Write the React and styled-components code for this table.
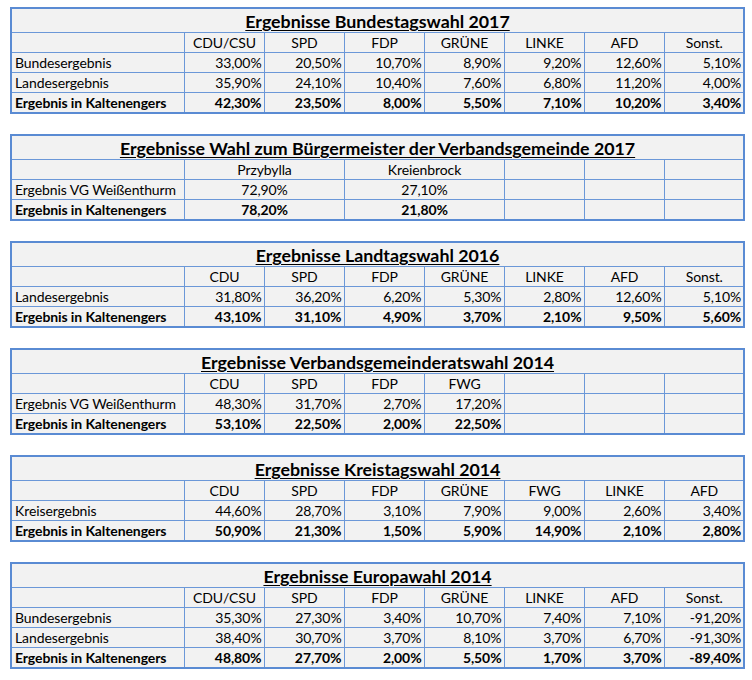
import React from 'react';
import styled, { createGlobalStyle } from 'styled-components';

const GlobalStyle = createGlobalStyle`
  body {
    margin: 0;
    background: #ffffff;
    font-family: Lato, "Liberation Sans", sans-serif;
    color: #000;
  }
`;

const Page = styled.div`
  display: flex;
  flex-direction: column;
  gap: 20px;
  padding: 7px 0 0 10px;
`;

const Table = styled.table`
  width: 733px;
  table-layout: fixed;
  border-collapse: collapse;
  border: 2px solid #5a8bd3;
  background: #f2f2f2;
  font-size: 14px;
  letter-spacing: -0.1px;
`;

const TitleCell = styled.td`
  height: 23px;
  padding: 0;
  text-align: center;
  vertical-align: bottom;
  font-size: 17.8px;
  font-weight: 700;
  line-height: 22px;
  letter-spacing: 0;
  border: 1px solid #6b98d8;

  span {
    text-decoration: underline;
    text-underline-offset: 2px;
  }
`;

const Cell = styled.td`
  height: 19px;
  padding: 0 2px 0 3px;
  line-height: 19px;
  white-space: nowrap;
  overflow: visible;
  vertical-align: bottom;
  border: 1px solid #6b98d8;
  text-align: ${({ $align }) => $align || 'right'};
  font-weight: ${({ $bold }) => ($bold ? 700 : 400)};
`;

const tables = [
  {
    title: 'Ergebnisse Bundestagswahl 2017',
    head: ['CDU/CSU', 'SPD', 'FDP', 'GRÜNE', 'LINKE', 'AFD', 'Sonst.'],
    rows: [
      ['Bundesergebnis', '33,00%', '20,50%', '10,70%', '8,90%', '9,20%', '12,60%', '5,10%'],
      ['Landesergebnis', '35,90%', '24,10%', '10,40%', '7,60%', '6,80%', '11,20%', '4,00%'],
      ['Ergebnis in Kaltenengers', '42,30%', '23,50%', '8,00%', '5,50%', '7,10%', '10,20%', '3,40%'],
    ],
  },
  {
    title: 'Ergebnisse Wahl zum Bürgermeister der Verbandsgemeinde 2017',
    head: ['Przybylla', 'Kreienbrock', '', '', ''],
    span: [2, 2, 1, 1, 1],
    centered: true,
    rows: [
      ['Ergebnis VG Weißenthurm', '72,90%', '27,10%', '', '', ''],
      ['Ergebnis in Kaltenengers', '78,20%', '21,80%', '', '', ''],
    ],
  },
  {
    title: 'Ergebnisse Landtagswahl 2016',
    head: ['CDU', 'SPD', 'FDP', 'GRÜNE', 'LINKE', 'AFD', 'Sonst.'],
    rows: [
      ['Landesergebnis', '31,80%', '36,20%', '6,20%', '5,30%', '2,80%', '12,60%', '5,10%'],
      ['Ergebnis in Kaltenengers', '43,10%', '31,10%', '4,90%', '3,70%', '2,10%', '9,50%', '5,60%'],
    ],
  },
  {
    title: 'Ergebnisse Verbandsgemeinderatswahl 2014',
    head: ['CDU', 'SPD', 'FDP', 'FWG', '', '', ''],
    rows: [
      ['Ergebnis VG Weißenthurm', '48,30%', '31,70%', '2,70%', '17,20%', '', '', ''],
      ['Ergebnis in Kaltenengers', '53,10%', '22,50%', '2,00%', '22,50%', '', '', ''],
    ],
  },
  {
    title: 'Ergebnisse Kreistagswahl 2014',
    head: ['CDU', 'SPD', 'FDP', 'GRÜNE', 'FWG', 'LINKE', 'AFD'],
    rows: [
      ['Kreisergebnis', '44,60%', '28,70%', '3,10%', '7,90%', '9,00%', '2,60%', '3,40%'],
      ['Ergebnis in Kaltenengers', '50,90%', '21,30%', '1,50%', '5,90%', '14,90%', '2,10%', '2,80%'],
    ],
  },
  {
    title: 'Ergebnisse Europawahl 2014',
    head: ['CDU/CSU', 'SPD', 'FDP', 'GRÜNE', 'LINKE', 'AFD', 'Sonst.'],
    rows: [
      ['Bundesergebnis', '35,30%', '27,30%', '3,40%', '10,70%', '7,40%', '7,10%', '-91,20%'],
      ['Landesergebnis', '38,40%', '30,70%', '3,70%', '8,10%', '3,70%', '6,70%', '-91,30%'],
      ['Ergebnis in Kaltenengers', '48,80%', '27,70%', '2,00%', '5,50%', '1,70%', '3,70%', '-89,40%'],
    ],
  },
];

function ResultTable({ data }) {
  const span = data.span || data.head.map(() => 1);
  return (
    <Table>
      <colgroup>
        <col style={{ width: 173 }} />
        {Array.from({ length: 7 }).map((_, i) => (
          <col key={i} style={{ width: 80 }} />
        ))}
      </colgroup>
      <tbody>
        <tr>
          <TitleCell colSpan={8}>
            <span>{data.title}</span>
          </TitleCell>
        </tr>
        <tr>
          <Cell />
          {data.head.map((h, i) => (
            <Cell key={i} colSpan={span[i]} $align="center">
              {h}
            </Cell>
          ))}
        </tr>
        {data.rows.map((row, r) => {
          const bold = row[0] === 'Ergebnis in Kaltenengers';
          return (
            <tr key={r}>
              <Cell $align="left" $bold={bold}>
                {row[0]}
              </Cell>
              {row.slice(1).map((v, i) => (
                <Cell
                  key={i}
                  colSpan={span[i]}
                  $bold={bold}
                  $align={data.centered ? 'center' : 'right'}
                >
                  {v}
                </Cell>
              ))}
            </tr>
          );
        })}
      </tbody>
    </Table>
  );
}

export default function App() {
  return (
    <>
      <GlobalStyle />
      <Page>
        {tables.map((t) => (
          <ResultTable key={t.title} data={t} />
        ))}
      </Page>
    </>
  );
}
